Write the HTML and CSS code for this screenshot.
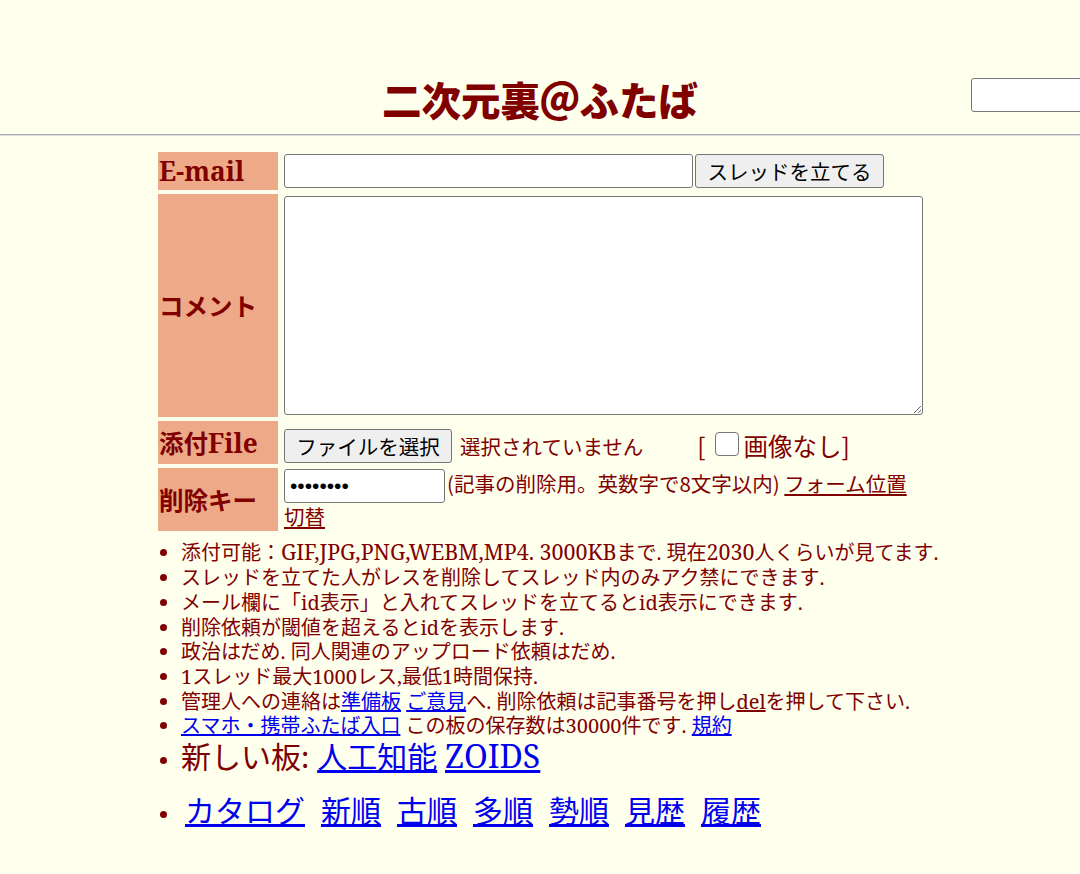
FILE: index.html
```html
<!DOCTYPE html>
<html lang="ja">
	<head>
		<meta charset="UTF-8">
		<title>二次元裏@ふたば</title>
		<link rel="stylesheet" href="styles.css">
	</head>
	<body>
		<div class="head">
			<h1 class="title">二次元裏＠ふたば</h1>
			<input class="search" type="text">
		</div>
		<hr class="line">
		<form class="post">
		<table class="ftb">
			<tr>
				<td class="lb"><span class="la">E-mail</span></td>
				<td class="fd"><div class="row"><input class="email" type="text"><button class="btn sub" type="button">スレッドを立てる</button></div></td>
			</tr>
			<tr>
				<td class="lb">コメント</td>
				<td class="fd"><textarea class="com"></textarea></td>
			</tr>
			<tr>
				<td class="lb">添付<span class="la">File</span></td>
				<td class="fd upl"><button class="btn file" type="button">ファイルを選択</button><span class="nofile">選択されていません</span><span class="noimg">[<input class="chk" type="checkbox">画像なし]</span></td>
			</tr>
			<tr>
				<td class="lb">削除キー</td>
				<td class="fd del"><input class="pwd" type="password" value="12345678">(記事の削除用。英数字で8文字以内) <a class="red" href="#">フォーム位置切替</a></td>
			</tr>
		</table>
		</form>
		<ul class="rules">
			<li>添付可能：<span class="la">GIF,JPG,PNG,WEBM,MP4. 3000KB</span>まで. 現在<span class="la">2030</span>人くらいが見てます.</li>
			<li>スレッドを立てた人がレスを削除してスレッド内のみアク禁にできます.</li>
			<li>メール欄に「id表示」と入れてスレッドを立てるとid表示にできます.</li>
			<li>削除依頼が閾値を超えるとidを表示します.</li>
			<li>政治はだめ. 同人関連のアップロード依頼はだめ.</li>
			<li>1スレッド最大1000レス,最低1時間保持.</li>
			<li>管理人への連絡は<a href="#">準備板</a> <a href="#">ご意見</a>へ. 削除依頼は記事番号を押し<a class="red" href="#">del</a>を押して下さい.</li>
			<li><a href="#">スマホ・携帯ふたば入口</a> この板の保存数は30000件です. <a href="#">規約</a></li>
			<li class="big"><span class="bt"><span class="jp">新しい板:</span> <a class="jp" href="#">人工知能</a> <a class="la" href="#">ZOIDS</a></span></li>
			<li class="big menu"><a href="#">カタログ</a><a href="#">新順</a><a href="#">古順</a><a href="#">多順</a><a href="#">勢順</a><a href="#">見歴</a><a href="#">履歴</a></li>
		</ul>
	</body>
</html>
```

FILE: styles.css
```css
body{
	margin: 0;
	background-color: #FFFFEE;
	color: #800000;
	font-family: "Noto Serif", "DejaVu Serif Condensed", "Noto Sans CJK JP", serif;
	overflow-x: hidden;
}
a{
	color: #0000EE;
}
a.red{
	color: #800000;
}
/* latin runs are set a touch larger than the kana around them */
.la{
	font-size: 1.07em;
}
.head{
	position: relative;
	padding-top: 70px;
}
.title{
	margin: 0;
	text-align: center;
	font-family: "Noto Sans CJK JP", sans-serif;
	font-size: 39.5px;
	line-height: 58px;
	font-weight: 900;
}
.search{
	position: absolute;
	top: 78px;
	left: 971px;
	width: 130px;
	height: 34px;
	box-sizing: border-box;
	border: 1px solid #767676;
	border-radius: 3px;
	background: #fff;
}
.line{
	margin: 6px 0 0 0;
	border: none;
	border-top: 1px solid #aaa;
	border-bottom: 1px solid #ddd;
}
.post{
	margin-top: 12px;
}
.ftb{
	margin: 0 0 0 154px;
	border-spacing: 4px;
}
.lb{
	width: 118px;
	padding: 1px;
	background-color: #EEAA88;
	font-family: "Noto Serif", "DejaVu Serif", "Noto Sans CJK JP", serif;
	font-weight: bold;
	font-size: 24.5px;
}
.fd{
	padding: 1px 1px 1px 2px;
	width: 639px;
	font-family: "Noto Sans CJK JP", sans-serif;
	font-size: 20.5px;
	line-height: 28px;
}
.row{
	display: flex;
	gap: 2px;
	margin-bottom: 1px;
}
.email{
	width: 409px;
	height: 34px;
	box-sizing: border-box;
	border: 1px solid #767676;
	border-radius: 3px;
	background: #fff;
}
.btn{
	height: 34px;
	box-sizing: border-box;
	border: 1px solid #767676;
	border-radius: 3px;
	background-color: #EFEFEF;
	color: #000;
	font-family: "Noto Sans CJK JP", sans-serif;
	font-size: 20.5px;
	padding: 0 10px;
	vertical-align: middle;
}
.sub{
	width: 189px;
}
.file{
	width: 168px;
	margin-right: 8px;
}
.com{
	display: block;
	width: 639px;
	height: 219px;
	box-sizing: border-box;
	border: 1px solid #767676;
	border-radius: 3px;
	background: #fff;
	margin: 1px 0;
}
.upl{
	padding-top: 8px;
}
.nofile{
	vertical-align: middle;
}
.noimg{
	margin-left: 54px;
	font-size: 24.5px;
	vertical-align: middle;
}
.chk{
	appearance: none;
	-webkit-appearance: none;
	width: 24px;
	height: 24px;
	margin: 0 5px 0 9px;
	border: 1px solid #767676;
	border-radius: 4px;
	background: #fff;
	vertical-align: 0;
}
.del{
	line-height: 27px;
}
.pwd{
	width: 161px;
	height: 34px;
	box-sizing: border-box;
	border: 1px solid #767676;
	border-radius: 3px;
	background: #fff;
	margin-right: 2px;
	padding-left: 5px;
	font-family: "Liberation Sans", sans-serif;
	font-size: 21px;
	vertical-align: middle;
}
.rules{
	margin: 5px 0 0 0;
	padding-left: 181px;
	font-size: 20px;
	line-height: 24.7px;
}
.big{
	line-height: 32px;
}
.bt{
	font-size: 30px;
}
.jp{
	font-family: "Noto Sans CJK JP", sans-serif;
}
.menu{
	margin-top: 16px;
	padding-left: 4px;
}
.menu a{
	font-family: "Noto Sans CJK JP", sans-serif;
	font-size: 30px;
	margin-right: 16px;
}
```
